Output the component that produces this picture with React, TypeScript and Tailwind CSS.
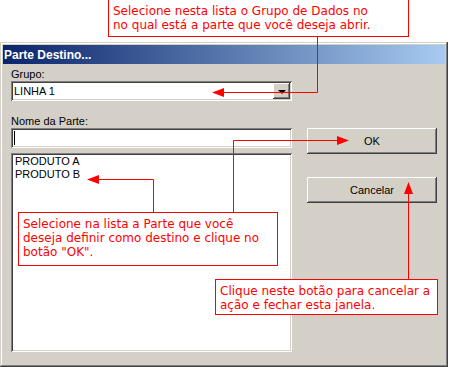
import React from "react"

const sunken =
    "shadow-[inset_1px_1px_0_#808080,inset_-1px_-1px_0_#ffffff,inset_2px_2px_0_#404040,inset_-2px_-2px_0_#d4d0c8]"
const raised =
    "shadow-[inset_-1px_-1px_0_#404040,inset_1px_1px_0_#ffffff,inset_-2px_-2px_0_#808080,inset_2px_2px_0_#d4d0c8]"

function Note({ className, lines }: { className: string; lines: string[] }) {
    return (
        <div
            className={`absolute border border-[#ff0000] bg-white text-[#ff0000] text-[12px] leading-[14px] px-[4px] py-[4px] font-['DejaVu_Sans',sans-serif] ${className}`}
        >
            {lines.map((l, i) => (
                <div key={i} className="whitespace-nowrap">
                    {l}
                </div>
            ))}
        </div>
    )
}

export default function App() {
    return (
        <div className="relative w-[449px] h-[367px] bg-white overflow-hidden font-['Liberation_Sans',Arial,sans-serif] text-[11px] text-black">
            {/* dialog window */}
            <div
                className={`mt-[42px] w-[448px] h-[325px] bg-[#d4d0c8] p-[3px] flex flex-col shadow-[inset_-1px_-1px_0_#404040,inset_1px_1px_0_#d4d0c8,inset_-2px_-2px_0_#808080,inset_2px_2px_0_#ffffff]`}
            >
                <div className="h-[19px] flex items-center pl-[1px] bg-[linear-gradient(to_right,#0a246a,#a6caf0)] text-white font-bold text-[12px]">
                    Parte Destino...
                </div>
                <div className="flex px-[8px] gap-[15px]">
                    {/* left column */}
                    <div className="w-[281px] flex flex-col">
                        <div className="h-[14px] mt-[3px] leading-[14px]">Grupo:</div>
                        <div className={`h-[20px] bg-white ${sunken} flex items-center pl-[3px] pr-[2px]`}>
                            <span className="flex-1">LINHA 1</span>
                            <div className={`w-[17px] h-[16px] bg-[#d4d0c8] ${raised} flex items-center justify-center`}>
                                <div className="w-0 h-0 border-l-[4px] border-r-[4px] border-t-[4px] border-l-transparent border-r-transparent border-t-black mt-[1px]" />
                            </div>
                        </div>
                        <div className="h-[14px] mt-[13px] leading-[14px]">Nome da Parte:</div>
                        <div className={`h-[20px] bg-white ${sunken} flex items-center pl-[3px]`}>
                            <div className="w-[1px] h-[14px] bg-black" />
                        </div>
                        <div className={`h-[199px] mt-[5px] bg-white ${sunken} pt-[2px] pl-[4px] leading-[13px]`}>
                            <div>PRODUTO A</div>
                            <div>PRODUTO B</div>
                        </div>
                    </div>
                    {/* right column */}
                    <div className="w-[130px] flex flex-col pt-[64px] gap-[23px]">
                        <div className={`h-[26px] ${raised} flex items-center justify-center`}>OK</div>
                        <div className={`h-[26px] ${raised} flex items-center justify-center`}>Cancelar</div>
                    </div>
                </div>
            </div>

            {/* annotations */}
            <svg className="absolute inset-0 pointer-events-none" width="449" height="367">
                <g stroke="#ff0000" strokeWidth="1" fill="none">
                    <polyline points="317.5,36 317.5,92.5 222,92.5" />
                    <polyline points="153.5,212 153.5,179.5 97,179.5" />
                    <polyline points="233.5,212 233.5,140.5 338,140.5" />
                    <polyline points="408.5,279 408.5,193" />
                </g>
                <g fill="#ff0000">
                    <polygon points="212,92.5 224,88 224,97" />
                    <polygon points="87,179.5 99,175 99,184" />
                    <polygon points="349,140.5 337,136 337,145" />
                    <polygon points="408.5,182 404,194 413,194" />
                </g>
            </svg>
            <Note
                className="left-[108px] top-[-1px] w-[301px] h-[38px]"
                lines={["Selecione nesta lista o Grupo de Dados no", "no qual está a parte que você deseja abrir."]}
            />
            <Note
                className="left-[18px] top-[212px] w-[260px] h-[54px]"
                lines={["Selecione na lista a Parte que você", "deseja definir como destino e clique no", 'botão "OK".']}
            />
            <Note
                className="left-[215px] top-[279px] w-[223px] h-[36px] py-[3px]"
                lines={["Clique neste botão para cancelar a", "ação e fechar esta janela."]}
            />
        </div>
    )
}
